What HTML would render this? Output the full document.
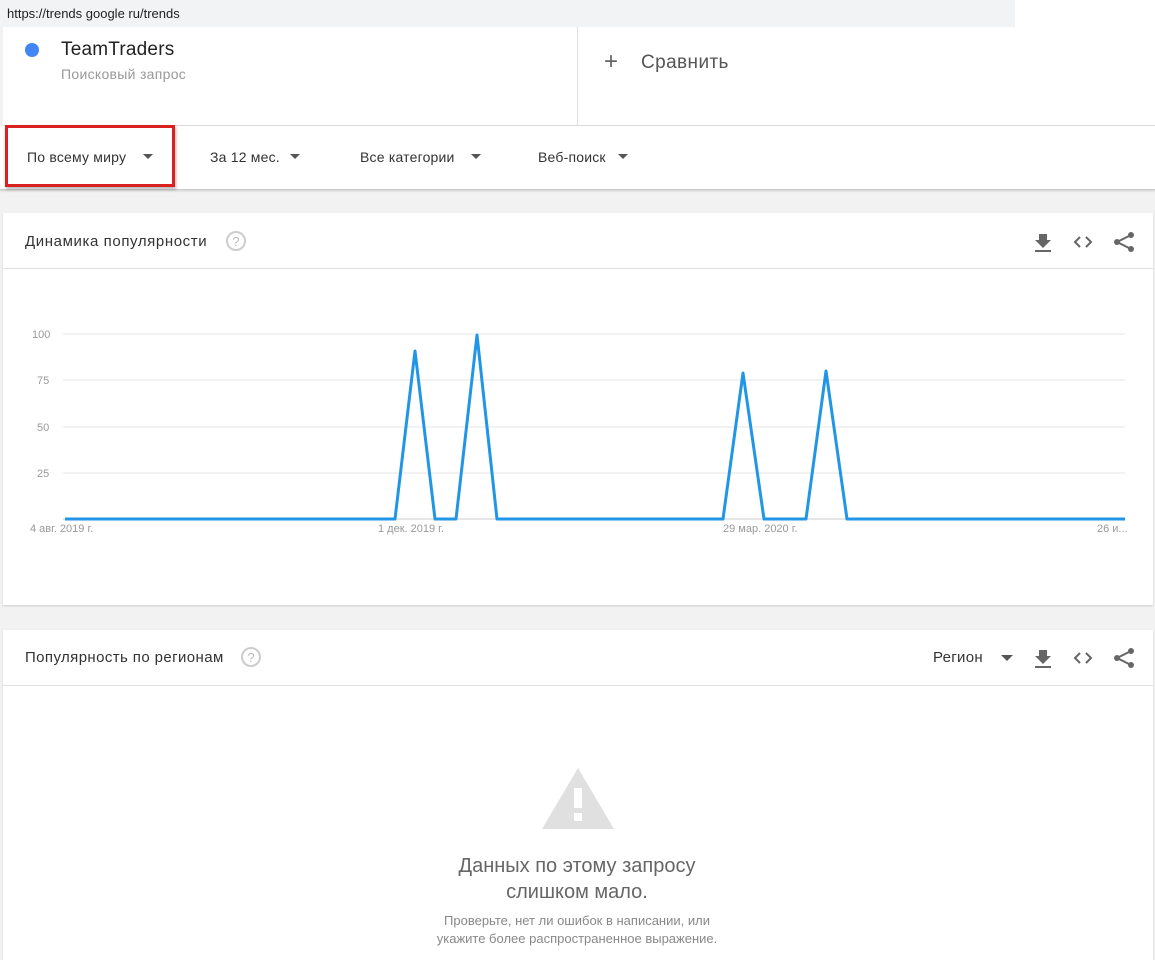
<!DOCTYPE html><html><head><meta charset="utf-8"><style>
body{margin:0;width:1155px;height:950px;background:#f2f2f2;font-family:"Liberation Sans",sans-serif;position:relative;overflow:hidden;color:#333}
.a{position:absolute}
.ic{fill:#666}
.ar{position:absolute;width:0;height:0;border-left:5px solid transparent;border-right:5px solid transparent;border-top:5px solid #555}
</style></head><body>
<div class="a" style="left:0;top:0;width:1015px;height:27px;background:#f1f3f4;font-size:13px;line-height:27px;padding-left:7px;box-sizing:border-box;color:#222">https://trends google ru/trends</div>
<div class="a" style="left:1015px;top:0;width:140px;height:27px;background:#fff"></div>
<div class="a" style="left:3px;top:27px;width:1152px;height:98px;background:#fff;border-bottom:1px solid #ddd"></div>
<div class="a" style="left:577px;top:27px;width:1px;height:98px;background:#e0e0e0"></div>
<div class="a" style="left:25px;top:43px;width:14px;height:14px;border-radius:50%;background:#4285f4"></div>
<div class="a" style="left:61px;top:39px;font-size:19px;color:#222;letter-spacing:0.2px">TeamTraders</div>
<div class="a" style="left:61px;top:66px;font-size:14px;color:#999;letter-spacing:0.3px">Поисковый запрос</div>
<div class="a" style="left:604px;top:48px;font-size:24px;color:#666;font-weight:300">+</div>
<div class="a" style="left:641px;top:52px;font-size:19px;color:#555;letter-spacing:0.4px">Сравнить</div>
<div class="a" style="left:0;top:126px;width:1155px;height:63px;background:#fff;border-bottom:1px solid #ccc;box-shadow:0 1px 2px rgba(0,0,0,.15)"></div>
<div class="a" style="left:5px;top:125px;width:170px;height:62px;border:3px solid #d9211f;box-sizing:border-box;box-shadow:1px 2px 3px rgba(0,0,0,.3)"></div>
<div class="a" style="left:27px;top:149px;font-size:14px;color:#333;letter-spacing:0.2px">По всему миру</div><div class="ar" style="left:143px;top:154px"></div>
<div class="a" style="left:210px;top:149px;font-size:14px;color:#333;letter-spacing:0.2px">За 12 мес.</div><div class="ar" style="left:290px;top:154px"></div>
<div class="a" style="left:360px;top:149px;font-size:14px;color:#333;letter-spacing:0.2px">Все категории</div><div class="ar" style="left:471px;top:154px"></div>
<div class="a" style="left:538px;top:149px;font-size:14px;color:#333;letter-spacing:0.2px">Веб-поиск</div><div class="ar" style="left:618px;top:154px"></div>

<div class="a" style="left:3px;top:213px;width:1150px;height:392px;background:#fff;box-shadow:0 1px 2px rgba(0,0,0,.15)"></div>
<div class="a" style="left:3px;top:268px;width:1150px;height:1px;background:#e0e0e0"></div>
<div class="a" style="left:25px;top:233px;font-size:15px;color:#333;letter-spacing:0.6px">Динамика популярности</div>
<div class="a" style="left:226px;top:231px;width:20px;height:20px;border:2px solid #ccc;border-radius:50%;box-sizing:border-box;font-size:13px;color:#bbb;text-align:center;line-height:17px">?</div>
<svg class="a" style="left:1030px;top:230px" width="110" height="24"><path class="ic" d="M9 4h8v6h4l-8 8-8-8h4zM5 20h16v2H5z"/><path d="M50 7l-5 5 5 5M56 7l5 5-5 5" stroke="#666" stroke-width="2" fill="none"/><g fill="#666"><circle cx="101" cy="5" r="3"/><circle cx="87" cy="12" r="3"/><circle cx="101" cy="19" r="3"/></g><path d="M101 5L87 12L101 19" stroke="#666" stroke-width="2" fill="none"/></svg>
<svg class="a" style="left:0;top:320px" width="1155" height="220">
<g stroke="#e6e6e6"><line x1="63" x2="1125" y1="14" y2="14"/><line x1="63" x2="1125" y1="60" y2="60"/><line x1="63" x2="1125" y1="107" y2="107"/><line x1="63" x2="1125" y1="153" y2="153"/><line x1="63" x2="1125" y1="199" y2="199" stroke="#ccc"/></g>
<g fill="#999" font-size="11" font-family="Liberation Sans"><text x="32" y="18">100</text><text x="37" y="64">75</text><text x="37" y="111">50</text><text x="37" y="157">25</text>
<text x="30" y="212">4 авг. 2019 г.</text><text x="378" y="212">1 дек. 2019 г.</text><text x="723" y="212">29 мар. 2020 г.</text><text x="1097" y="212">26 и...</text></g>
<polyline fill="none" stroke="#2196e6" stroke-width="3" stroke-linejoin="round" points="65,199 395,199 415,31 435,199 456,199 477,15 497,199 723,199 743,53 764,199 806,199 826,51 847,199 1125,199"/>
</svg>

<div class="a" style="left:3px;top:630px;width:1150px;height:330px;background:#fff;box-shadow:0 1px 2px rgba(0,0,0,.15)"></div>
<div class="a" style="left:3px;top:685px;width:1150px;height:1px;background:#e0e0e0"></div>
<div class="a" style="left:25px;top:649px;font-size:15px;color:#333;letter-spacing:0.4px">Популярность по регионам</div>
<div class="a" style="left:241px;top:647px;width:20px;height:20px;border:2px solid #ccc;border-radius:50%;box-sizing:border-box;font-size:13px;color:#bbb;text-align:center;line-height:17px">?</div>
<div class="a" style="left:933px;top:649px;font-size:15px;color:#333;letter-spacing:0.3px">Регион</div><div class="ar" style="left:1001px;top:655px;border-width:6px 6px 0 6px"></div>
<svg class="a" style="left:1030px;top:646px" width="110" height="24"><path class="ic" d="M9 4h8v6h4l-8 8-8-8h4zM5 20h16v2H5z"/><path d="M50 7l-5 5 5 5M56 7l5 5-5 5" stroke="#666" stroke-width="2" fill="none"/><g fill="#666"><circle cx="101" cy="5" r="3"/><circle cx="87" cy="12" r="3"/><circle cx="101" cy="19" r="3"/></g><path d="M101 5L87 12L101 19" stroke="#666" stroke-width="2" fill="none"/></svg>
<svg class="a" style="left:540px;top:766px" width="76" height="64"><path d="M38 2L74 63H2z" fill="#e0e0e0"/><rect x="34" y="22" width="8" height="20" fill="#fff"/><rect x="34" y="47" width="8" height="8" fill="#fff"/></svg>
<div class="a" style="left:327px;top:853px;width:500px;text-align:center;font-size:20px;line-height:26px;color:#666">Данных по этому запросу<br>слишком мало.</div>
<div class="a" style="left:327px;top:912px;width:500px;text-align:center;font-size:13px;line-height:18px;color:#888">Проверьте, нет ли ошибок в написании, или<br>укажите более распространенное выражение.</div>
</body></html>
